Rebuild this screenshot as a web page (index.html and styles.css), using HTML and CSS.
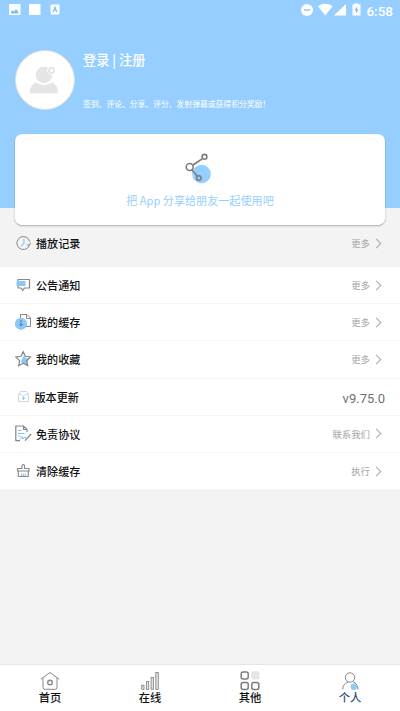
FILE: index.html
```html
<!DOCTYPE html>
<html lang="zh-CN">
<head>
<meta charset="utf-8">
<title>个人</title>
<link rel="stylesheet" href="styles.css">
</head>
<body>
<div class="screen">
  <header class="hero">
    <div class="status">
      <svg class="status-left" width="60" height="14" viewBox="0 0 60 14">
        <rect x="0" y="1" width="11.5" height="11" rx="1" fill="#fff"/>
        <path d="M2 10.500V8.500L4 7.500L5 8.500L7 6L9.500 9V10.500Z" fill="#7dbdf0"/>
        <rect x="20" y="1" width="11.500" height="11" rx=".5" fill="#fff"/>
        <rect x="41.500" y="1.500" width="9" height="10" rx="1" fill="#fff"/>
        <path d="M44.100 9L46 4L47.900 9M44.800 7.300H47.200" fill="none" stroke="#7dbdf0" stroke-width="1.100"/>
      </svg>
      <svg class="status-right" width="62" height="14" viewBox="0 0 62 14">
        <circle cx="8" cy="7" r="6" fill="#fff"/>
        <path d="M5 7H11" stroke="#80bdec" stroke-width="1.300"/>
        <path d="M19 3.200Q26.200-1.600 33.500 3.200L26.200 12.500Z" fill="#fff"/>
        <path d="M47 1V12.500H35Z" fill="#fff"/>
        <path d="M55.500 .5H59.500V1.600H61.500V12.500H53.500V1.600H55.500Z" fill="#fff"/>
        <path d="M58.200 3.300L55.500 7.500H57.100V10.500L59.600 6.500H58.200Z" fill="#7dbdf0"/>
      </svg>
      <span class="clock">6:58</span>
    </div>
    <div class="profile">
      <div class="avatar">
        <svg width="32" height="30" viewBox="0 0 32 30">
          <circle cx="15" cy="10" r="8.300" fill="#e5e5e5"/>
          <path d="M.5 28.300Q.8 20.500 6.500 17.300Q15 23 23.500 17.300Q28.700 20.500 29 28.300Z" fill="#e5e5e5"/>
          <circle cx="22.500" cy="5.500" r="4.300" fill="#fff"/>
          <circle cx="22.500" cy="5.500" r="2.600" fill="none" stroke="#e2e2e2" stroke-width="1.700"/>
        </svg>
      </div>
      <div class="who">
        <div class="login">登录 | 注册</div>
        <div class="hint">签到、评论、分享、评分、发射弹幕或获得积分奖励！</div>
      </div>
    </div>
  </header>
  <section class="share">
    <svg width="30" height="32" viewBox="-1 0 30 32">
      <circle cx="15.500" cy="21" r="9.300" fill="#96cfff"/>
      <g fill="none" stroke="#7d7d7d" stroke-width="1.600">
        <path d="M7 12L16 6M5.500 16.500L11.300 23"/>
        <circle cx="3.700" cy="14" r="3.500" fill="#fff"/>
        <circle cx="18.500" cy="3.800" r="2.400"/>
        <circle cx="12.800" cy="25" r="2.300"/>
      </g>
    </svg>
    <div>把 App 分享给朋友一起使用吧</div>
  </section>
  <main class="list">
    <div class="row history">
      <svg class="icon" viewBox="0 0 18 18" fill="none">
        <path d="M14.200 12A6.500 6.500 0 1 1 14.700 7.500M11.800 10.900L14.600 11.300L15.300 8.800" stroke="#888"/>
        <path d="M8.900 5V9.300L6 12.200" stroke="#8ac8f8" stroke-width="1.200"/>
      </svg>
      <span class="name">播放记录</span><span class="more">更多</span><i class="arrow"></i>
    </div>
    <div class="row">
      <svg class="icon" viewBox="0 0 18 18" fill="none">
        <path d="M3 3.500H14.500V12H9.500L7.700 14.200L6 12H3Z" stroke="#888" stroke-width="1.200"/>
        <rect x="1.500" y="5" width="9" height="5" fill="#8ac8f8"/>
      </svg>
      <span class="name">公告通知</span><span class="more">更多</span><i class="arrow"></i>
    </div>
    <div class="row">
      <svg class="icon" viewBox="0 0 18 18" fill="none">
        <path d="M5.500 6V1.500H12L15.500 5V13.500H8M11.500 1.500V5.500H15.500" stroke="#888"/>
        <circle cx="6" cy="10.800" r="6.100" fill="#8ac8f8"/>
        <path d="M6 7V13M4 11L6 13L8 11" stroke="#607b95"/>
      </svg>
      <span class="name">我的缓存</span><span class="more">更多</span><i class="arrow"></i>
    </div>
    <div class="row">
      <svg class="icon" viewBox="0 0 18 18" fill="none">
        <path d="M9 5L10.800 8L14.300 8.500L12 11.500L12.500 15L8.500 13L5.500 12Z" fill="#8ac8f8"/>
        <path d="M8.200 1.700L10.400 6.300L15.500 7L11.800 10.600L12.700 15.700L8.200 13.300L3.700 15.700L4.600 10.600L.9 7L6 6.300Z" stroke="#858585" stroke-width="1.200"/>
      </svg>
      <span class="name">我的收藏</span><span class="more">更多</span><i class="arrow"></i>
    </div>
    <div class="row update">
      <svg class="icon" viewBox="0 0 18 18" fill="none">
        <path d="M3.500 6.500L5.500 3.500H11.500L13.500 6.500V13.500H3.500ZM3.500 6.500H6.500L7.500 8H9.500L10.500 6.500H13.500" stroke="#ccc" stroke-width=".8"/>
        <path d="M8.500 8.500V12M6.800 10.300H10.200" stroke="#8ac8f8"/>
      </svg>
      <span class="name">版本更新</span><span class="version">v9.75.0</span>
    </div>
    <div class="row">
      <svg class="icon" viewBox="0 0 18 18" fill="none">
        <path d="M12 7V4.500L8.500 1H.8V15.700H5M8.500 1V4.500H12M10 15.700L16.200 9" stroke="#858585" stroke-width="1.200"/>
        <path d="M3 5.500H6.500M3 8.500H9.500M3 11H5.500M5 14.500L7 11.500L7.800 14L10 12L11 14.500" stroke="#82c4f7"/>
      </svg>
      <span class="name">免责协议</span><span class="more">联系我们</span><i class="arrow"></i>
    </div>
    <div class="row">
      <svg class="icon" viewBox="0 0 18 18" fill="none">
        <path d="M2.500 9V6.500H7V3.500Q8.250 1.500 9.500 3.500V6.500H14V9ZM3.300 9V14.500H13.300V9" stroke="#888" stroke-width="1.100"/>
        <path d="M6.500 11.500V14M8.300 11.500V14M10.200 11.500V14" stroke="#86c8f8" stroke-width="1.200"/>
      </svg>
      <span class="name">清除缓存</span><span class="more">执行</span><i class="arrow"></i>
    </div>
  </main>
  <nav class="tabs">
    <div class="tab">
      <svg width="20" height="20" viewBox="0 0 20 20" fill="none" stroke="#888">
        <path d="M.8 8.200L10 1.500L19.200 8.200M3 7V16.500Q3 18.300 4.800 18.300H15.200Q17 18.300 17 16.500V7"/><circle cx="10" cy="11.500" r="2.300" stroke-width="1.400"/>
      </svg><span>首页</span>
    </div>
    <div class="tab">
      <svg width="20" height="20" viewBox="0 0 20 20" fill="#e5e5e5" stroke="#888" stroke-width=".9">
        <rect x="1.700" y="14.300" width="2.300" height="4"/><rect x="6.400" y="10.500" width="2.300" height="7.800"/><rect x="11.100" y="6.500" width="2.300" height="11.800"/><rect x="15.800" y="1.500" width="2.500" height="16.800"/>
      </svg><span>在线</span>
    </div>
    <div class="tab">
      <svg width="20" height="20" viewBox="0 0 20 20" fill="none" stroke="#7c7c7c" stroke-width="1.500">
        <rect x="1.200" y="1" width="7" height="7" rx="2"/><rect x="11.200" y=".3" width="8.300" height="8.300" rx="2" fill="#e5e5e5" stroke="none"/><rect x="1.200" y="11.500" width="7" height="7" rx="2"/><rect x="11.800" y="11.500" width="7" height="7" rx="2"/>
      </svg><span>其他</span>
    </div>
    <div class="tab active">
      <svg width="20" height="20" viewBox="0 0 20 20" fill="none" stroke="#8a8a8a">
        <circle cx="10" cy="6.500" r="4.700"/><path d="M2.700 18.500Q2.800 12.700 8 11.200M13 10.700Q17.600 12.600 18 18.500"/><circle cx="13.800" cy="15.800" r="3.200" fill="#8ecbfb" stroke="none"/>
      </svg><span>个人</span>
    </div>
  </nav>
</div>
</body>
</html>
```

FILE: styles.css
```css
* {
  box-sizing: border-box;
}

body {
  margin: 0;
  font-family: Roboto, "Noto Sans CJK SC", sans-serif;
}

.screen {
  display: flex;
  flex-direction: column;
  width: 400px;
  height: 711px;
  overflow: hidden;
  background: #f3f3f3;
}

svg {
  display: block;
  flex: none;
}

.hero {
  flex: none;
  height: 208px;
  background: #96cfff;
  color: #fff;
}

.status {
  display: flex;
  align-items: center;
  height: 20px;
  padding: 0 7px 0 9px;
}

.status-right {
  margin: 0 5px 0 auto;
}

.clock {
  font-size: 13.5px;
  font-weight: 500;
  line-height: 20px;
  padding-top: 1px;
}

.profile {
  display: flex;
  gap: 8px;
  padding: 30px 15px 0;
}

.avatar {
  display: flex;
  align-items: center;
  justify-content: center;
  flex: none;
  width: 60px;
  height: 60px;
  border: 1.5px solid #dedede;
  border-radius: 50%;
  background: #fff;
}

.login {
  font-family: "Noto Sans CJK SC", sans-serif;
  font-size: 13.2px;
  font-weight: 500;
  line-height: 20px;
}

.hint {
  margin-top: 29px;
  font-size: 7.8px;
  line-height: 12px;
  white-space: nowrap;
}

.share {
  display: flex;
  flex: none;
  flex-direction: column;
  align-items: center;
  gap: 6px;
  height: 91px;
  margin: -74px 15px 0;
  padding-top: 19px;
  border-radius: 7px;
  background: #fff;
  box-shadow: 0 1px 2px rgba(0, 0, 0, .3);
  color: #96cfff;
  font-family: "Noto Sans CJK SC", sans-serif;
  font-size: 11.1px;
  line-height: 18px;
}

.row {
  display: flex;
  align-items: center;
  height: 37.2px;
  padding: 0 20px 0 15px;
  border-bottom: 1px solid #f5f5f5;
  background: #fff;
}

.history {
  height: 42px;
  padding-bottom: 6px;
  border: 0;
  background: none;
}

.icon {
  width: 18px;
  height: 18px;
  margin-right: 3px;
}

.name {
  color: #111;
  font-size: 11.1px;
  font-weight: 500;
}

.more {
  margin-left: auto;
  color: #a5a5a5;
  font-size: 9.400px;
}

.arrow {
  width: 7px;
  height: 7px;
  margin-left: 3px;
  border: solid #aaa;
  border-width: 1px 1px 0 0;
  transform: rotate(45deg);
}

.update {
  padding-right: 15px;
}

.update .icon {
  margin-right: 1.500px;
}

.version {
  margin: 4px 0 0 auto;
  color: #707070;
  font-size: 13px;
}

.tabs {
  display: flex;
  height: 47px;
  margin-top: auto;
  border-top: 1px solid #e5e5e5;
  background: #fff;
}

.tab {
  display: flex;
  flex: 1;
  flex-direction: column;
  align-items: center;
  padding-top: 6px;
  color: #111;
  font-size: 11.300px;
  font-weight: 500;
  line-height: 16px;
}

.active {
  color: #29496e;
}
```
